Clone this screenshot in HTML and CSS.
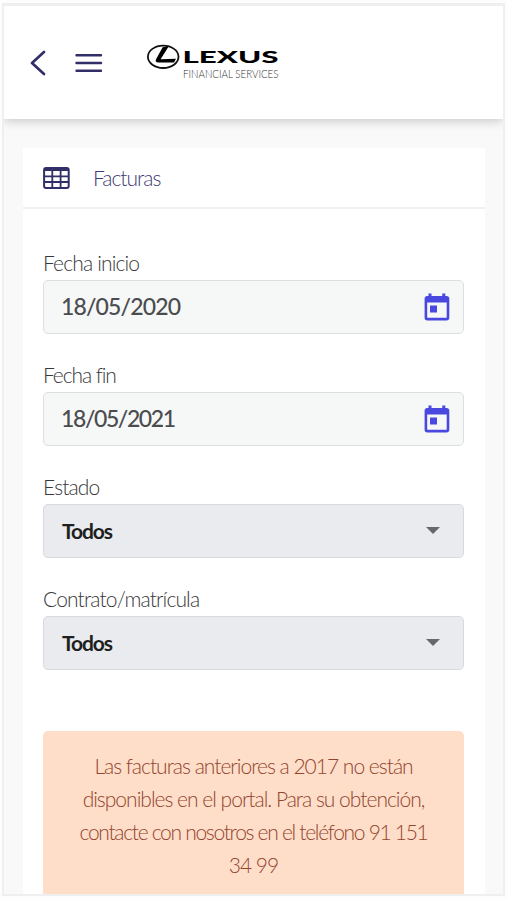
FILE: index.html
```html
<!DOCTYPE html>
<html lang="es">
<head>
    <meta charset="UTF-8">
    <meta name="viewport" content="width=device-width, initial-scale=1.0">
    <title>Facturas</title>
    <link rel="stylesheet" href="styles.css">
</head>
<body>
    <div class="screen">
        <header class="topbar">
            <svg class="back" width="16" height="26" viewBox="0 0 16 26">
                <path d="M14 2 L2 13 L14 24"/>
            </svg>
            <svg class="menu" width="28" height="20" viewBox="0 0 28 20">
                <path d="M1.5 2.2 H26 M1.5 10 H26 M1.5 17.8 H26"/>
            </svg>
            <svg class="logo" width="140" height="46" viewBox="0 -4 140 46">
                <ellipse cx="17.2" cy="12.8" rx="15.3" ry="11.2"/>
                <path class="emblem" d="M16.6 3.2 L22.8 2.2 L14.6 15.2 L30 14.8 L28 18.6 L12.5 18.6 Q8.4 18.2 10.2 15 Z"/>
                <text class="brand" x="36.5" y="19" textLength="96" lengthAdjust="spacingAndGlyphs">LEXUS</text>
                <text class="brand-sub" x="37" y="34" textLength="95.5" lengthAdjust="spacingAndGlyphs">FINANCIAL SERVICES</text>
            </svg>
        </header>

        <main class="card">
            <div class="card-header">
                <svg width="27" height="22" viewBox="0 0 27 22">
                    <rect class="table-frame" x="1.1" y="1.1" width="24.6" height="19.8" rx="2"/>
                    <path class="table-head" d="M1 3 Q1 1 3 1 H24 Q26 1 26 3 V4 H1 Z"/>
                    <path class="table-lines" d="M1 9.3 H26 M1 15 H26 M9.3 3 V21 M17.6 3 V21"/>
                </svg>
                <h1>Facturas</h1>
            </div>

            <form class="card-body">
                <div class="field">
                    <label>Fecha inicio</label>
                    <div class="control">
                        <span>18/05/2020</span>
                        <svg class="calendar" width="26" height="28" viewBox="0 0 26 28">
                            <path d="M4.5 0.5 H7.5 V3 H18.3 V0.5 H21.3 V3 H22.5 Q25.3 3 25.3 5.8 V24.7 Q25.3 27.4 22.5 27.4 H3.3 Q0.6 27.4 0.6 24.7 V5.8 Q0.6 3 3.3 3 H4.5 Z M3.2 9.6 V24.8 H22.7 V9.6 Z"/>
                            <rect x="6" y="12.5" width="7" height="7"/>
                        </svg>
                    </div>
                </div>
                <div class="field">
                    <label class="label-end">Fecha fin</label>
                    <div class="control">
                        <span class="date-end">18/05/2021</span>
                        <svg class="calendar" width="26" height="28" viewBox="0 0 26 28">
                            <path d="M4.5 0.5 H7.5 V3 H18.3 V0.5 H21.3 V3 H22.5 Q25.3 3 25.3 5.8 V24.7 Q25.3 27.4 22.5 27.4 H3.3 Q0.6 27.4 0.6 24.7 V5.8 Q0.6 3 3.3 3 H4.5 Z M3.2 9.6 V24.8 H22.7 V9.6 Z"/>
                            <rect x="6" y="12.5" width="7" height="7"/>
                        </svg>
                    </div>
                </div>
                <div class="field">
                    <label>Estado</label>
                    <div class="control select">
                        <span>Todos</span>
                        <i class="caret"></i>
                    </div>
                </div>
                <div class="field">
                    <label>Contrato/matrícula</label>
                    <div class="control select">
                        <span>Todos</span>
                        <i class="caret"></i>
                    </div>
                </div>
                <div class="alert">
                    <div>Las facturas anteriores a 2017 no están</div>
                    <div>disponibles en el portal. Para su obtención,</div>
                    <div class="tight">contacte con nosotros en el teléfono 91 151</div>
                    <div>34 99</div>
                </div>
            </form>
        </main>
    </div>
</body>
</html>
```
FILE: styles.css
```css
* {
    box-sizing: border-box;
}

body {
    margin: 0;
    padding: 3px 2px 0;
    height: 900px;
    overflow: hidden;
    background: #fdfdfd;
    font-family: Lato, "Liberation Sans", sans-serif;
    font-weight: 300;
    font-size: 20px;
    color: #38383a;
}

.screen {
    height: 893px;
    overflow: hidden;
    border: 2px solid #efefef;
    border-top-width: 3px;
    background: #f9f9f9;
}

.topbar {
    display: flex;
    align-items: center;
    height: 113px;
    padding-left: 26px;
    background: #fff;
    box-shadow: 0 2px 10px rgba(0, 0, 0, 0.2);
}

.back,
.menu {
    fill: none;
    stroke: #322e68;
    stroke-width: 2.7;
    stroke-linecap: round;
    stroke-linejoin: round;
}

.menu {
    margin-left: 29px;
    stroke-width: 2.4;
}

.logo {
    margin-left: 43px;
    overflow: visible;
}

.logo ellipse {
    fill: none;
    stroke: #111;
    stroke-width: 1.8;
}

.emblem {
    fill: #000;
}

.brand {
    font: 900 17px Lato, sans-serif;
    fill: #000;
}

.brand-sub {
    font: 300 12px Lato, sans-serif;
    fill: #333;
}

.card {
    margin: 29px 18px 0 19px;
    height: 800px;
    background: #fff;
}

.card-header {
    display: flex;
    align-items: center;
    height: 61px;
    padding: 0 20px;
    border-bottom: 2px solid #f1f1f1;
}

.table-frame {
    fill: none;
    stroke: #322e68;
    stroke-width: 2;
}

.table-head {
    fill: #322e68;
}

.table-lines {
    fill: none;
    stroke: #322e68;
    stroke-width: 1.8;
}

h1 {
    margin: 0 0 0 23px;
    font-size: 21px;
    font-weight: 300;
    letter-spacing: -1px;
    color: #3f3a75;
}

.card-body {
    padding: 39px 21px 0 20px;
}

.field {
    height: 111.9px;
}

label {
    display: block;
    height: 32px;
    line-height: 29px;
    font-size: 21px;
    letter-spacing: -0.85px;
    white-space: nowrap;
}

.label-end {
    letter-spacing: -1.1px;
}

.control {
    display: flex;
    align-items: center;
    justify-content: space-between;
    height: 54px;
    padding: 0 13px 0 17px;
    border: 1.5px solid #dbdfe1;
    border-radius: 5px;
    background: #f6f7f7;
    font-size: 23px;
    font-weight: 500;
    letter-spacing: -0.85px;
    color: #4a4c4e;
}

.control span {
    padding-bottom: 2px;
}

.control .date-end {
    letter-spacing: -1.4px;
}

.calendar {
    fill: #4b48df;
    fill-rule: evenodd;
}

.select {
    padding: 0 23px 0 18px;
    border-color: #d8dbde;
    background: #e9ebee;
    font-size: 21px;
    font-weight: 700;
    letter-spacing: -1.1px;
    color: #1e1f21;
}

.select span {
    padding-bottom: 0;
}

.caret {
    border: 7px solid transparent;
    border-top-color: #66696c;
    border-bottom: 0;
}

.alert {
    margin-top: 35px;
    height: 200px;
    padding-top: 18px;
    border-radius: 5px;
    background: #fedec9;
    color: #93452f;
    font-size: 21px;
    line-height: 33.2px;
    letter-spacing: -1px;
    text-align: center;
    white-space: nowrap;
}

.tight {
    letter-spacing: -1.3px;
}
```
